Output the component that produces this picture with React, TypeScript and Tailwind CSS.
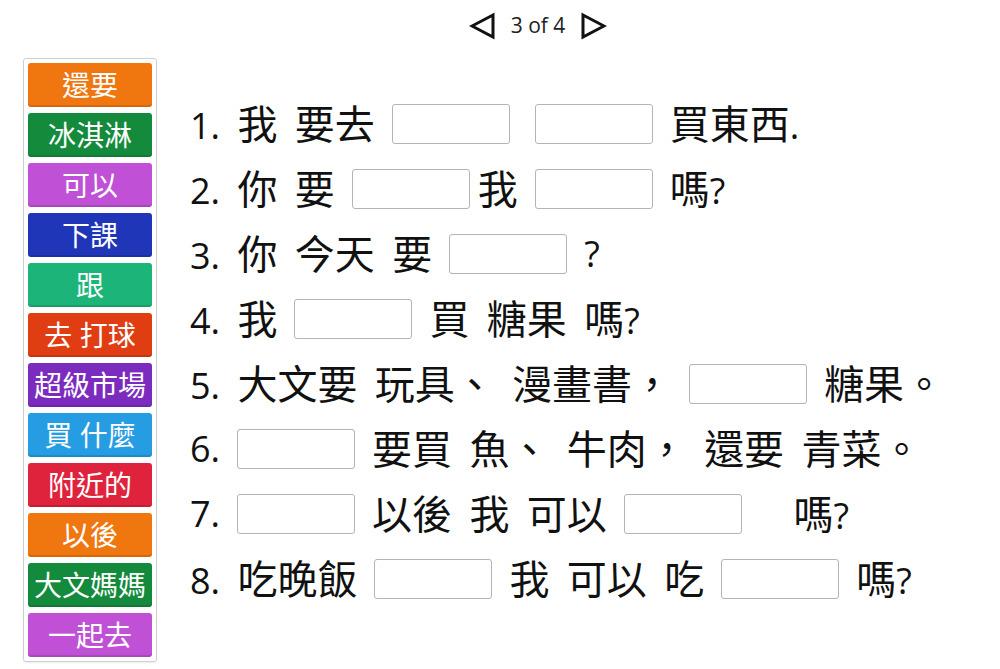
import React from 'react';

const tiles: { label: string; color: string }[] = [
  { label: '還要', color: 'bg-[#f0760f]' },
  { label: '冰淇淋', color: 'bg-[#148a3c]' },
  { label: '可以', color: 'bg-[#c050d6]' },
  { label: '下課', color: 'bg-[#1f36b8]' },
  { label: '跟', color: 'bg-[#1db47a]' },
  { label: '去 打球', color: 'bg-[#e03d12]' },
  { label: '超級市場', color: 'bg-[#7b2cbf]' },
  { label: '買 什麼', color: 'bg-[#269ce3]' },
  { label: '附近的', color: 'bg-[#e0233c]' },
  { label: '以後', color: 'bg-[#f0760f]' },
  { label: '大文媽媽', color: 'bg-[#148a3c]' },
  { label: '一起去', color: 'bg-[#c050d6]' },
];

// null marks a blank slot; tight text sits right after the blank with no space
type Seg = string | null | { text: string; tight: true };

const sentences: Seg[][] = [
  ['1. 我 要去', null, null, '買東西.'],
  ['2. 你 要', null, { text: '我', tight: true }, null, '嗎?'],
  ['3. 你 今天 要', null, '?'],
  ['4. 我', null, '買 糖果 嗎?'],
  ['5. 大文要 玩具、 漫畫書，', null, '糖果。'],
  ['6.', null, '要買 魚、 牛肉， 還要 青菜。'],
  ['7.', null, '以後 我 可以', null, '\u00a0\u00a0嗎?'],
  ['8. 吃晚飯', null, '我 可以 吃', null, '嗎?'],
];

const CJK = /[\u3000-\u303f\u4e00-\u9fff\uff00-\uffef]/;

// CJK characters render a bit larger than the latin digits in the original
function Mixed({ text, tight }: { text: string; tight?: boolean }) {
  const parts = text.split(/([\u3000-\u303f\u4e00-\u9fff\uff00-\uffef]+)/);
  return (
    <span className={`whitespace-pre ${tight ? '-ml-[9px]' : ''}`}>
      {parts.map((p, i) =>
        CJK.test(p) ? (
          <span key={i} className="text-[40px]">{p}</span>
        ) : (
          <span key={i}>{p}</span>
        )
      )}
    </span>
  );
}

function Blank() {
  return <span className="inline-block shrink-0 w-[118px] h-[40px] mx-[8px] border border-[#b4b4b4] rounded-[3px] bg-white" />;
}

export default function App() {
  return (
    <div
      className="w-[1000px] h-[669px] bg-white text-[#111] overflow-hidden"
      style={{ fontFamily: '"Open Sans", "Noto Sans CJK TC", sans-serif' }}
    >
      {/* pager */}
      <div className="h-[52px] flex items-center justify-center gap-[15px] pl-[76px]">
        <svg width="27" height="28" viewBox="0 0 27 28">
          <path d="M24 3 L3 14 L24 25 Z" fill="none" stroke="#111" strokeWidth="3" />
        </svg>
        <span className="text-[21px] text-[#222]">3 of 4</span>
        <svg width="27" height="28" viewBox="0 0 27 28">
          <path d="M3 3 L24 14 L3 25 Z" fill="none" stroke="#111" strokeWidth="3" />
        </svg>
      </div>

      <div className="flex">
        {/* word bank */}
        <div className="ml-[23px] mt-[6px] w-[134px] border border-[#cfcfcf] rounded-[3px] p-[4px] flex flex-col gap-[6px] shadow-[0_1px_2px_rgba(0,0,0,0.08)]">
          {tiles.map((t, i) => (
            <div
              key={i}
              className={`${t.color} h-[44px] rounded-[3px] flex items-center justify-center text-white text-[28px] leading-none whitespace-nowrap shadow-[inset_0_-2px_0_rgba(0,0,0,0.12)]`}
            >
              {t.label}
            </div>
          ))}
        </div>

        {/* sentences */}
        <div className="ml-[33px] pt-[39px] flex flex-col">
          {sentences.map((row, i) => (
            <div key={i} className="h-[65px] flex items-center gap-[9px] text-[36px] leading-none whitespace-nowrap [word-spacing:8px]">
              {row.map((seg, j) =>
                seg === null ? (
                  <Blank key={j} />
                ) : typeof seg === 'string' ? (
                  <Mixed key={j} text={seg} />
                ) : (
                  <Mixed key={j} text={seg.text} tight />
                )
              )}
            </div>
          ))}
        </div>
      </div>
    </div>
  );
}
